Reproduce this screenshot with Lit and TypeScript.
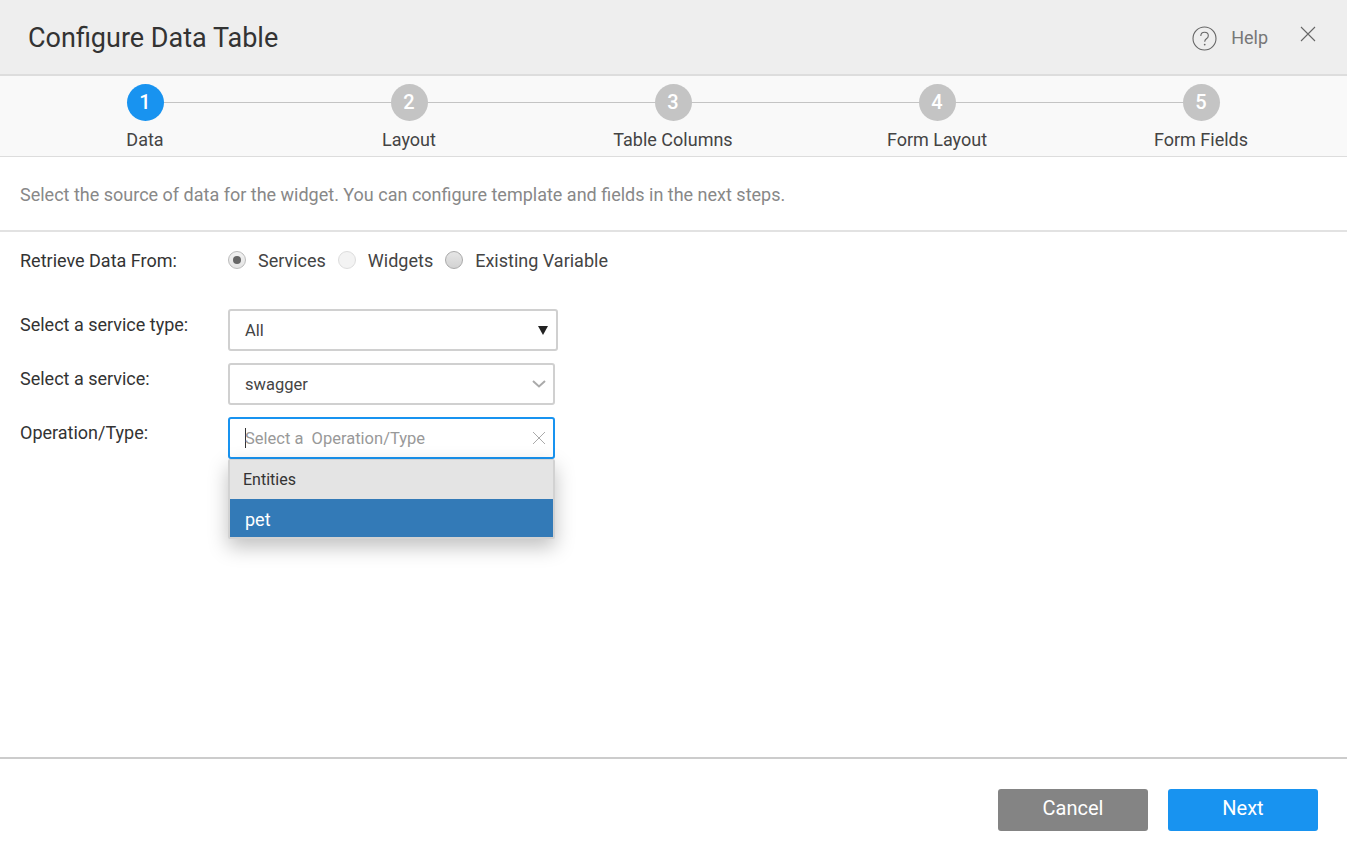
import { css, html, LitElement, svg } from 'lit';
import { customElement } from 'lit/decorators.js';

const STEPS = ['Data', 'Layout', 'Table Columns', 'Form Layout', 'Form Fields'];

const helpIcon = svg`<circle cx="12.5" cy="12.5" r="11.5" fill="none" stroke="#666" stroke-width="1.1"/>
  <path d="M8.8 10c0-2.3 1.7-3.7 3.8-3.7s3.7 1.4 3.7 3.4c0 1.5-.8 2.3-1.9 3.1-1.1.8-1.7 1.4-1.7 2.9" fill="none" stroke="#666" stroke-width="1.1"/>
  <circle cx="12.7" cy="18.6" r=".9" fill="#666"/>`;

@customElement('app-root')
export class AppRoot extends LitElement {
  static get styles() {
    return css`
      :host {
        display: flex;
        flex-direction: column;
        height: 860px;
        font-family: Roboto, "Liberation Sans", sans-serif;
        color: #333;
        background: #fff;
      }

      .header {
        display: flex;
        align-items: center;
        height: 74px;
        padding: 0 31px 0 28px;
        background: #eee;
        border-bottom: 2px solid #ddd;
      }
      .title { font-size: 27px; flex: 1; color: #333; padding-top: 1px; }
      .help-icon { width: 25px; height: 25px; margin: 3px 14px 0 0; }
      .help { font-size: 18px; color: #777; margin-right: 32px; }
      .close { width: 16px; height: 16px; margin-bottom: 6px; }

      .steps {
        position: relative;
        display: flex;
        height: 80px;
        padding: 0 14px 0 13px;
        background: #f9f9f9;
        border-bottom: 1px solid #ddd;
      }
      .line {
        position: absolute;
        left: 145px;
        right: 146px;
        top: 26px;
        height: 1px;
        background: #c4c4c4;
      }
      .step {
        position: relative;
        flex: 1;
        display: flex;
        flex-direction: column;
        align-items: center;
        padding-top: 8px;
      }
      .num {
        width: 37px;
        height: 37px;
        border-radius: 50%;
        background: #c4c4c4;
        color: #fff;
        font-size: 20px;
        font-weight: 500;
        line-height: 37px;
        text-align: center;
      }
      .step.active .num { background: #1893f0; }
      .step-label { margin-top: 8px; font-size: 18px; line-height: 22px; color: #444; }

      .intro {
        display: flex;
        align-items: center;
        padding: 1px 20px 0;
        box-sizing: border-box;
        border-bottom: 2px solid #e2e2e2;
        height: 75px;
        font-size: 18px;
        color: #888;
      }

      .form { flex: 1; position: relative; padding: 0 20px; }
      .row { display: flex; }
      .label { width: 208px; font-size: 18px; line-height: 22px; color: #333; }

      .radios { display: flex; align-items: center; height: 24px; font-size: 18px; color: #444; }
      .radio {
        width: 16px;
        height: 16px;
        border-radius: 50%;
        border: 1px solid #bbb;
        background: linear-gradient(#f2f2f2, #e4e4e4);
        display: flex;
        align-items: center;
        justify-content: center;
        margin-right: 12px;
      }
      .radio.faint { border-color: #ddd; background: #f3f3f3; }
      .radio.dark { background: linear-gradient(#e6e6e6, #d2d2d2); border-color: #aaa; }
      .radio i { width: 8px; height: 8px; border-radius: 50%; background: #666; }
      .radio-text { margin-right: 12px; }

      .field {
        position: relative;
        box-sizing: border-box;
        display: flex;
        align-items: center;
        width: 327px;
        height: 42px;
        padding: 0 7px 0 15px;
        border: 2px solid #d0d0d0;
        border-radius: 3px;
        font-size: 16.5px;
        color: #444;
        background: #fff;
      }
      .field.wide { width: 330px; padding-right: 8px; }
      .field.focus { border-color: #1893f0; color: #999; }
      .field span { flex: 1; white-space: pre; }
      .caret { width: 1px; height: 20px; background: #333; margin-right: -1px; }

      .dropdown {
        position: absolute;
        left: -2px;
        top: 40px;
        width: 327px;
        box-sizing: border-box;
        background: #fff;
        border-style: solid;
        border-width: 1px 2px 2px;
        border-color: #d2d2d2;
        border-radius: 2px;
        box-shadow: 0 8px 20px rgba(0, 0, 0, 0.25);
        font-size: 16px;
        z-index: 2;
      }
      .group { height: 39px; line-height: 39px; padding-left: 13px; background: #e4e4e4; color: #333; }
      .option { height: 38px; line-height: 41px; padding-left: 15px; background: #337ab7; color: #fff; font-size: 18px; }

      .footer {
        display: flex;
        justify-content: flex-end;
        gap: 20px;
        height: 103px;
        box-sizing: border-box;
        padding: 30px 29px 0 0;
        border-top: 2px solid #ccc;
      }
      .btn {
        width: 150px;
        height: 42px;
        border-radius: 3px;
        color: #fff;
        font-size: 20px;
        line-height: 38px;
        text-align: center;
      }
      .btn.cancel { background: #848484; }
      .btn.next { background: #1893f0; }
    `;
  }

  render() {
    return html`
      <div class="header">
        <div class="title">Configure Data Table</div>
        <svg class="help-icon" viewBox="0 0 25 25">${helpIcon}</svg>
        <div class="help">Help</div>
        <svg class="close" viewBox="0 0 16 16">
          <path d="M1 1l14 14M15 1L1 15" stroke="#666" stroke-width="1.1" fill="none" />
        </svg>
      </div>

      <div class="steps">
        <div class="line"></div>
        ${STEPS.map((s, i) => html`
          <div class="step ${i === 0 ? 'active' : ''}">
            <div class="num">${i + 1}</div>
            <div class="step-label">${s}</div>
          </div>
        `)}
      </div>

      <div class="intro">Select the source of data for the widget. You can configure template and fields in the next steps.</div>

      <div class="form">
        <div class="row" style="margin-top:16px">
          <div class="label" style="padding-top:2px">Retrieve Data From:</div>
          <div class="radios">
            <div class="radio"><i></i></div>
            <div class="radio-text">Services</div>
            <div class="radio faint"></div>
            <div class="radio-text">Widgets</div>
            <div class="radio dark"></div>
            <div class="radio-text">Existing Variable</div>
          </div>
        </div>

        <div class="row" style="margin-top:37px">
          <div class="label" style="padding-top:5px">Select a service type:</div>
          <div class="field wide">
            <span>All</span>
            <svg width="10" height="9" viewBox="0 0 10 9"><path d="M0 0h10L5 9z" fill="#222" /></svg>
          </div>
        </div>

        <div class="row" style="margin-top:12px">
          <div class="label" style="padding-top:5px">Select a service:</div>
          <div class="field">
            <span>swagger</span>
            <svg width="14" height="8" viewBox="0 0 14 8"><path d="M1 1l6 5.5L13 1" stroke="#aaa" stroke-width="2" fill="none" /></svg>
          </div>
        </div>

        <div class="row" style="margin-top:12px">
          <div class="label" style="padding-top:5px">Operation/Type:</div>
          <div class="field focus">
            <div class="caret"></div>
            <span>Select a  Operation/Type</span>
            <svg width="14" height="14" viewBox="0 0 14 14"><path d="M1 1l12 12M13 1L1 13" stroke="#aaa" stroke-width="1" fill="none" /></svg>
            <div class="dropdown">
              <div class="group">Entities</div>
              <div class="option">pet</div>
            </div>
          </div>
        </div>
      </div>

      <div class="footer">
        <div class="btn cancel">Cancel</div>
        <div class="btn next">Next</div>
      </div>
    `;
  }
}
